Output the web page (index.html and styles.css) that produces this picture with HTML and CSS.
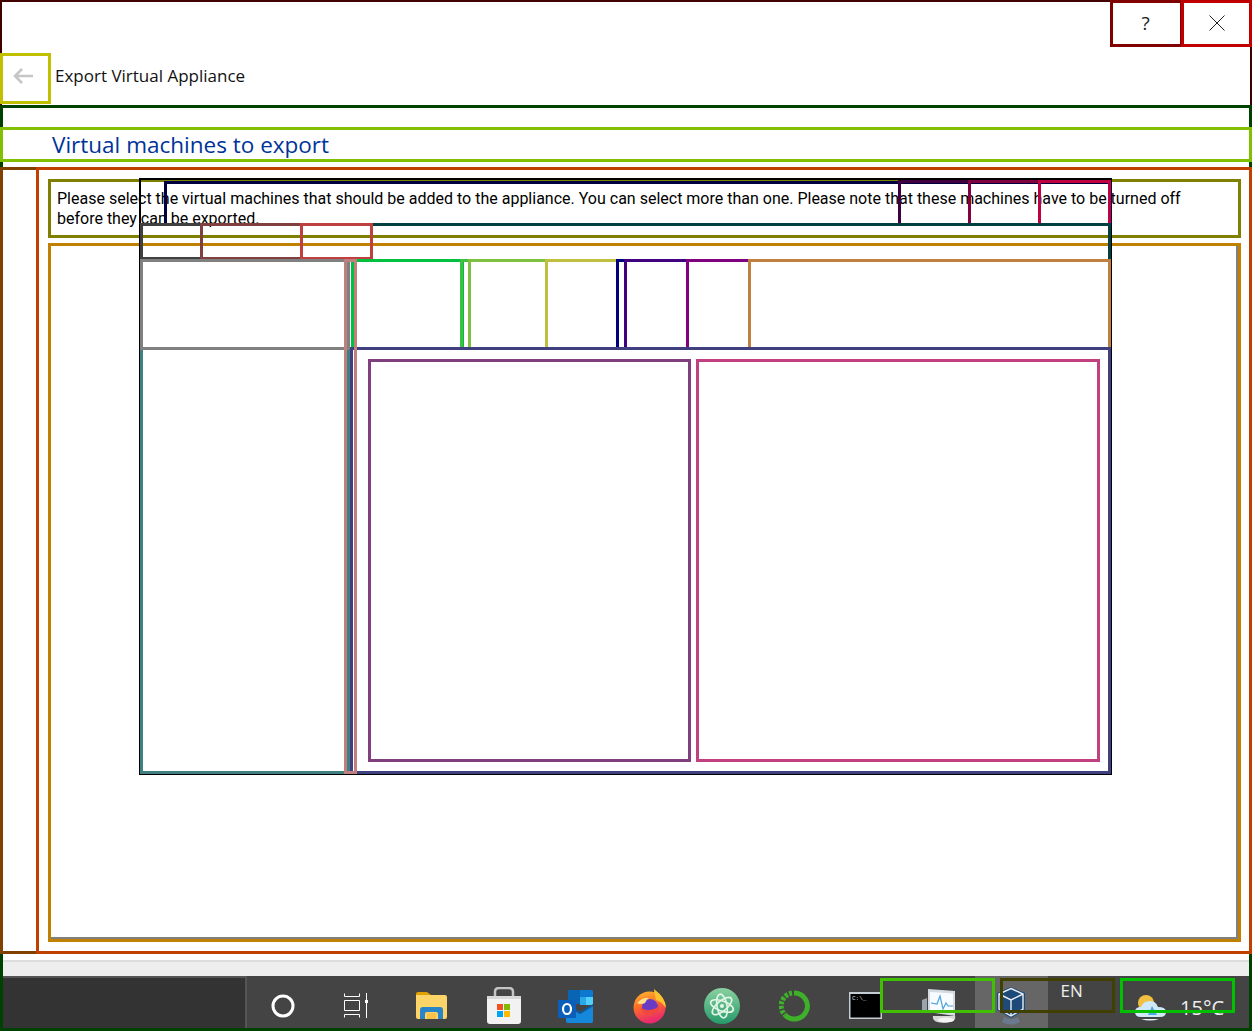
FILE: index.html
```html
<!DOCTYPE html>
<html lang="en">
<head>
    <meta charset="UTF-8">
    <meta name="viewport" content="width=device-width, initial-scale=1.0">
    <title>Export Virtual Appliance</title>
    <link rel="stylesheet" href="styles.css">
</head>
<body>
    <div class="dialog">
        <div class="title-buttons">
            <div class="title-button">?</div>
            <div class="title-button">
                <svg width="16" height="16" viewBox="0 0 16 16"><path d="M.5.5l15 15M15.5.5l-15 15" stroke="#222" fill="none"/></svg>
            </div>
        </div>
        <div class="wizard-head">
            <div class="back-button">
                <svg width="20" height="16" viewBox="0 0 20 16"><path d="M20 8H2M9 1L2 8l7 7" stroke="#c6c6c6" stroke-width="2.6" fill="none"/></svg>
            </div>
            <div class="wizard-name">Export Virtual Appliance</div>
        </div>
        <h1 class="page-title">Virtual machines to export</h1>
        <p class="page-text">Please select the virtual machines that should be added to the appliance. You can select more than one. Please note that these machines have to be turned off before they can be exported.</p>
    </div>
    <div class="dialog-foot"></div>

    <div class="taskbar">
        <div class="search-area"></div>
        <div class="task-item">
            <svg width="26" height="26" viewBox="0 0 26 26"><circle cx="13" cy="13" r="10" stroke="#fff" stroke-width="3" fill="none"/></svg>
        </div>
        <div class="task-item">
            <svg width="26" height="25" viewBox="0 0 26 25" fill="none" stroke="#fff"><path d="M1.500 .5v3h15v-3M1.500 24.500v-3h15v3M1.500 7.500h15v10h-15zM23.500 0v25"/><path d="M22 7h3v3h-3z" fill="#fff" stroke="none"/></svg>
        </div>
        <div class="task-item task-item-first">
            <svg width="33" height="28" viewBox="0 0 33 28"><path d="M1 2q0-2 2-2h9l4 3h-15z" fill="#e0a000"/><path d="M1 3h29q2 0 2 2v20q0 2-2 2H3q-2 0-2-2z" fill="#fcd467"/><path d="M5 27V18q0-3 3-3h17q3 0 3 3v9h-5v-5q0-2-2-2h-9q-2 0-2 2v5z" fill="#2a84c8"/><path d="M12 27v-6h9v6z" fill="#f6c24a"/></svg>
        </div>
        <div class="task-item">
            <svg width="36" height="37" viewBox="0 0 36 37"><path d="M9 11V5q0-4 4-4h10q4 0 4 4v6" fill="none" stroke="#c4c4c4" stroke-width="2.500"/><path d="M1 9h34v25q0 3-3 3H4q-3 0-3-3z" fill="#f2f2f2"/><path d="M1 9h34v3H1z" fill="#d8d8d8"/><path d="M11 17h6v6h-6z" fill="#f25022"/><path d="M18 17h6v6h-6z" fill="#7fba00"/><path d="M11 24h6v6h-6z" fill="#00a4ef"/><path d="M18 24h6v6h-6z" fill="#ffb900"/></svg>
        </div>
        <div class="task-item">
            <svg class="outlook-icon" width="36" height="34" viewBox="0 0 36 34"><path d="M10 1h23q2 0 2 2v12H10z" fill="#0a64b4"/><path d="M22 1h11q2 0 2 2v5H22z" fill="#0c78d0"/><path d="M28 8h7v8h-7z" fill="#50d0fa"/><path d="M22 8h6v8h-6z" fill="#2aa8e8"/><path d="M8 17l14 8 13-8v15q0 2-2 2H10q-2 0-2-2z" fill="#1688dc"/><path d="M10 15l12 8 13-8v2l-13 8-14-8z" fill="#0a5ca8"/><path d="M1 11h16q1 0 1 1v16q0 1-1 1H1q-1 0-1-1V12q0-1 1-1z" fill="#0b5fb8"/><ellipse cx="9" cy="20" rx="4" ry="5" fill="none" stroke="#fff" stroke-width="2.200"/></svg>
        </div>
        <div class="task-item">
            <svg width="35" height="36" viewBox="0 0 35 36">
                <defs>
                    <linearGradient id="foxBody" x1="0" y1="0" x2="0.300" y2="1"><stop offset="0" stop-color="#ffc02c"/><stop offset=".5" stop-color="#ff6a2a"/><stop offset="1" stop-color="#ea2a6c"/></linearGradient>
                </defs>
                <circle cx="17.500" cy="19.500" r="16" fill="url(#foxBody)"/>
                <path d="M22 1q12 9 12 19-4-6-10-8-2-6-2-11z" fill="#ffc32e"/>
                <path d="M6 12q6-5 14-3 5 2 6 7l-9 1z" fill="#fb8a2a"/>
                <circle cx="18" cy="19" r="8" fill="#6a3ac4"/>
                <path d="M5 15q6-6 12-5-3 2-4 5-4 2-8 0z" fill="#ffe08a"/>
                <path d="M8 19q6 5 14 2 4-1 5-5 1 8-7 11-8 2-12-8z" fill="#f0483c"/>
            </svg>
        </div>
        <div class="task-item">
            <svg width="36" height="36" viewBox="0 0 36 36">
                <defs>
                    <linearGradient id="atomBg" x1="0" y1="0" x2="0" y2="1"><stop offset="0" stop-color="#8ad0a0"/><stop offset="1" stop-color="#269a6a"/></linearGradient>
                </defs>
                <circle cx="18" cy="18" r="18" fill="url(#atomBg)"/>
                <g fill="none" stroke="#e4f6e8" stroke-width="1.600">
                    <ellipse cx="18" cy="18" rx="12" ry="5" transform="rotate(20 18 18)"/>
                    <ellipse cx="18" cy="18" rx="12" ry="5" transform="rotate(-40 18 18)"/>
                    <ellipse cx="18" cy="18" rx="12" ry="5" transform="rotate(80 18 18)"/>
                </g>
                <circle cx="18" cy="18" r="2" fill="#e4f6e8"/>
            </svg>
        </div>
        <div class="task-item">
            <svg width="32" height="32" viewBox="0 0 32 32"><path d="M15 3a13 13 0 1 1-9 22" fill="none" stroke="#3fb02a" stroke-width="5"/><path d="M13 3a13 13 0 0 0-7 22" fill="none" stroke="#3fb02a" stroke-width="5" stroke-dasharray="3 1.500"/></svg>
        </div>
        <div class="task-item task-item-tray">
            <svg width="33" height="27" viewBox="0 0 33 27"><path d="M0 0h33v27H0z" fill="#c4ccd4"/><path d="M1.500 2h30v23.500h-30z" fill="#000"/><text class="console-prompt" x="3" y="8">C:\_</text></svg>
        </div>
        <div class="task-item">
            <svg width="35" height="36" viewBox="0 0 35 36"><path d="M1 12l5-2v14l-5-2z" fill="#9aa4ac"/><path d="M7 1l27 2v25L7 24z" fill="#d4dbe2"/><path d="M9 4l23 1.500v20L9 22.500z" fill="#f8fbff"/><path d="M10 15l6 1 3-8 3 13 3-6 2 3h5" fill="none" stroke="#4aa2dc" stroke-width="1.200"/><path d="M12 28h22q1 3-2 5-8 3-16 1-5-2-4-6z" fill="#d8d8d8"/><ellipse cx="25" cy="32" rx="8" ry="2.500" fill="#f4f4f4"/></svg>
        </div>
        <div class="task-item task-item-active">
            <svg width="30" height="38" viewBox="0 0 30 38"><path d="M15 0l14 6v17l-14 8-14-8V6z" fill="#1d4a78"/><path d="M3 7l12 6 12-6M15 13v16M15 1.500l12 5.500v15l-12 7-12-7V7z" fill="none" stroke="#e8eef4" stroke-width="1.400"/><path d="M8 30q7 4 14 0l2 5q-9 5-18 0z" fill="#6a7a8c"/></svg>
        </div>
        <div class="tray-lang">EN</div>
        <div class="tray-weather">
            <svg width="31" height="26" viewBox="0 0 31 26"><circle cx="11" cy="8" r="8" fill="#f2c040"/><path d="M6 22q-6 0-6-5t6-5q2-6 9-6 6 0 8 6 8 0 8 5t-6 5z" fill="#cfe8fa"/><path d="M17 11l5 9h-9z" fill="#4aa8ea"/><path d="M6 24h18q-9 3-18 0z" fill="#e8f4fc"/></svg>
            <span class="tray-temp">15°C</span>
        </div>
    </div>

    <!-- layout outlines drawn over the page -->
    <div class="outlines">
        <div class="outline o-root"></div>
        <div class="outline o-help"></div>
        <div class="outline o-close"></div>
        <div class="outline o-back"></div>
        <div class="outline o-page"></div>
        <div class="outline o-title"></div>
        <div class="outline o-side"></div>
        <div class="outline o-content"></div>
        <div class="outline o-text"></div>
        <div class="outline o-list-gray"></div>
        <div class="outline o-list"></div>
        <div class="outline o-window"></div>
        <div class="outline o-menubar"></div>
        <div class="outline o-menu-a"></div>
        <div class="outline o-menu-b"></div>
        <div class="outline o-menu-c"></div>
        <div class="outline o-central"></div>
        <div class="outline o-file"></div>
        <div class="outline o-machine"></div>
        <div class="outline o-help-menu"></div>
        <div class="outline o-tools"></div>
        <div class="outline o-tool-a"></div>
        <div class="outline o-tool-b"></div>
        <div class="outline o-tool-c"></div>
        <div class="outline o-tool-d"></div>
        <div class="outline o-tool-e"></div>
        <div class="outline o-tool-f"></div>
        <div class="outline o-tool-fill"></div>
        <div class="outline o-panes"></div>
        <div class="outline o-tree"></div>
        <div class="outline o-tree-head"></div>
        <div class="outline o-left-pane"></div>
        <div class="outline o-right-pane"></div>
        <div class="outline o-splitter"></div>
        <div class="outline o-tray-a"></div>
        <div class="outline o-tray-b"></div>
        <div class="outline o-tray-c"></div>
    </div>
</body>
</html>
```

FILE: styles.css
```css
html, body {
    margin: 0;
    height: 100%;
}

body {
    position: relative;
    width: 1252px;
    height: 1031px;
    overflow: hidden;
    background-color: #fff;
    font-family: "Open Sans", "Noto Sans", sans-serif;
    color: #000;
}

.dialog {
    height: 960px;
    box-sizing: border-box;
}

.title-buttons {
    display: flex;
    justify-content: flex-end;
    height: 53px;
}

.title-button {
    display: flex;
    align-items: center;
    justify-content: center;
    width: 71px;
    height: 45px;
    font-size: 19px;
    color: #222;
}

.wizard-head {
    display: flex;
    align-items: center;
    height: 46px;
}

.back-button {
    display: flex;
    align-items: center;
    justify-content: center;
    width: 46px;
    height: 46px;
}

.wizard-name {
    margin-left: 9px;
    padding-bottom: 2px;
    font-size: 17px;
    color: #111;
}

.page-title {
    margin: 27px 0 0 52px;
    height: 38px;
    font-size: 22.5px;
    line-height: 38px;
    font-weight: normal;
    color: #003399;
}

.page-text {
    margin: 25px 0 0 57px;
    width: 1150px;
    font-family: Roboto, "Open Sans", sans-serif;
    font-size: 16px;
    line-height: 20px;
}

.dialog-foot {
    height: 14px;
    border-top: 2px solid #ddd;
    background-color: #eee;
}

.taskbar {
    display: flex;
    height: 55px;
    background-color: #444;
}

.search-area {
    box-sizing: border-box;
    width: 247px;
    border-top: 2px solid #555;
    border-right: 2px solid #555;
    background-color: #333;
}

.task-item {
    display: flex;
    align-items: center;
    justify-content: center;
    box-sizing: border-box;
    width: 72.7px;
    padding-top: 4px;
    flex-shrink: 0;
}

.task-item-first {
    margin-left: 2.5px;
}

.task-item-tray {
    margin-left: -1.5px;
}

.task-item-active {
    background-color: #666;
}

.outlook-icon {
    margin-right: 2px;
}

.console-prompt {
    font-family: "Liberation Mono", monospace;
    font-size: 6px;
    fill: #ddd;
}

.tray-lang {
    width: 48px;
    padding-top: 3px;
    text-align: center;
    font-size: 17px;
    color: #eee;
}

.tray-weather {
    display: flex;
    align-items: center;
    margin-left: 39.5px;
    padding-top: 8px;
}

.tray-temp {
    margin-left: 14px;
    font-size: 20px;
    color: #eee;
}

/* outlines */
.outlines {
    position: absolute;
    top: 0;
    left: 0;
    width: 1252px;
    height: 1031px;
}

.outline {
    position: absolute;
    box-sizing: border-box;
    border: 3px solid #000;
}

.o-root { left: 0; top: 0; width: 1252px; height: 1031px; border-width: 2px; border-color: #400000; }
.o-help { left: 1110px; top: 0; width: 73px; height: 47px; border-color: #800000; }
.o-close { left: 1181px; top: 0; width: 71px; height: 47px; border-color: #c00000; }
.o-back { left: 0; top: 53px; width: 51px; height: 51px; border-color: #c0c000; }
.o-page { left: 0; top: 105px; width: 1252px; height: 926px; border-color: #004000; }
.o-title { left: 0; top: 127px; width: 1252px; height: 35px; border-color: #80c000; }
.o-side { left: 0; top: 167px; width: 39px; height: 787px; border-color: #804000; }
.o-content { left: 36px; top: 167px; width: 1216px; height: 787px; border-color: #c04000; }
.o-text { left: 48px; top: 179px; width: 1193px; height: 59px; border-color: #808000; }
.o-list-gray { left: 48px; top: 243px; width: 1191px; height: 697px; border-color: #808080; }
.o-list { left: 48px; top: 243px; width: 1193px; height: 699px; border-color: #c08000; }
.o-window { left: 139px; top: 178px; width: 973px; height: 597px; border-width: 2px; border-color: #000; }
.o-menubar { left: 164px; top: 181px; width: 948px; height: 45px; border-color: #000040; }
.o-menu-a { left: 898px; top: 180px; width: 73px; height: 46px; border-color: #400040; border-bottom-color: transparent; }
.o-menu-b { left: 968px; top: 180px; width: 73px; height: 46px; border-color: #800040; border-bottom-color: transparent; }
.o-menu-c { left: 1038px; top: 180px; width: 73px; height: 46px; border-color: #c00040; border-bottom-color: transparent; }
.o-central { left: 139px; top: 223px; width: 972px; height: 100px; border-color: #004040; border-left-color: transparent; border-bottom-color: transparent; }
.o-file { left: 140px; top: 223px; width: 63px; height: 37px; border-color: #404040; }
.o-machine { left: 200px; top: 223px; width: 103px; height: 37px; border-color: #804040; }
.o-help-menu { left: 300px; top: 223px; width: 73px; height: 37px; border-color: #c04040; }
.o-tools { left: 351px; top: 259px; width: 113px; height: 91px; border-color: #00c040; }
.o-tool-a { left: 460px; top: 259px; width: 11px; height: 91px; border-color: #40c040; }
.o-tool-b { left: 468px; top: 259px; width: 80px; height: 91px; border-color: #80c040; }
.o-tool-c { left: 545px; top: 259px; width: 74px; height: 91px; border-color: #c0c040; }
.o-tool-d { left: 616px; top: 259px; width: 11px; height: 91px; border-color: #000080; }
.o-tool-e { left: 624px; top: 259px; width: 65px; height: 91px; border-color: #400080; }
.o-tool-f { left: 686px; top: 259px; width: 65px; height: 91px; border-color: #800080; }
.o-tool-fill { left: 748px; top: 259px; width: 363px; height: 91px; border-color: #c08040; }
.o-panes { left: 350px; top: 347px; width: 761px; height: 427px; border-color: #404080; }
.o-tree { left: 140px; top: 347px; width: 210px; height: 427px; border-color: #408080; }
.o-tree-head { left: 140px; top: 259px; width: 210px; height: 91px; border-color: #808080; }
.o-left-pane { left: 368px; top: 359px; width: 323px; height: 403px; border-color: #804080; }
.o-right-pane { left: 696px; top: 359px; width: 404px; height: 403px; border-color: #c04080; }
.o-splitter { left: 344px; top: 259px; width: 13px; height: 515px; border-color: #c08080; }
.o-tray-a { left: 880px; top: 978px; width: 115px; height: 35px; border-color: #40c000; }
.o-tray-b { left: 1000px; top: 978px; width: 115px; height: 35px; border-color: #404000; }
.o-tray-c { left: 1120px; top: 978px; width: 115px; height: 35px; border-color: #00c000; }
```
